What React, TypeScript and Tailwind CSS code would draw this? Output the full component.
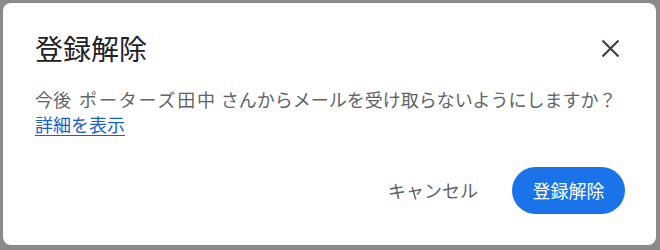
import React from "react";

export default function App() {
  return (
    <div
      className="w-[660px] h-[250px] bg-[#8a8a8a] pl-[3px] pt-[3px] pr-[4px] pb-[5px]"
      style={{ fontFamily: '"Noto Sans CJK JP", "Noto Sans", sans-serif' }}
    >
      <div className="bg-white rounded-[8px] h-full flex flex-col pl-[32px] pr-[31px] pt-[28px]">
        <div className="flex items-center justify-between">
          <h1 className="text-[28px] leading-[34px] text-[#202124]">登録解除</h1>
          <button className="w-[24px] h-[24px] mr-[3px] flex items-center justify-center text-[#3c4043]">
            <svg width="19" height="19" viewBox="0 0 19 19">
              <path d="M1.5 1.5 L17.5 17.5 M17.5 1.5 L1.5 17.5" stroke="currentColor" strokeWidth="2.2" strokeLinecap="butt" />
            </svg>
          </button>
        </div>
        <div className="mt-[22px] text-[18px] leading-[25px] text-[#5f6368]">
          <p className="whitespace-nowrap">
            今後{"\u00a0 "}<span className="tracking-[1.8px]">ポーターズ田中</span> さんからメールを受け取らないようにしますか？
          </p>
          <a className="text-[#1a5ed0] underline underline-offset-[3px]" href="#">詳細を表示</a>
        </div>
        <div className="mt-[30px] flex items-center justify-end gap-[34px]">
          <button className="text-[18px] text-[#5f6368]">キャンセル</button>
          <button className="w-[113px] h-[47px] rounded-full bg-[#1a73e8] text-white text-[18px]">登録解除</button>
        </div>
      </div>
    </div>
  );
}
